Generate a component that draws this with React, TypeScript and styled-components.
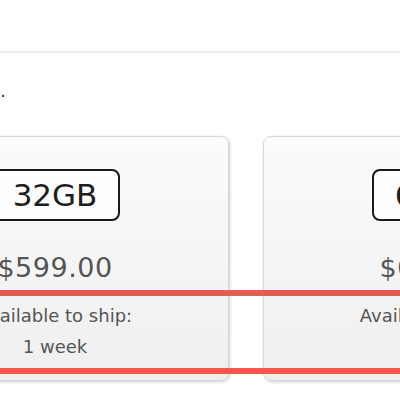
import React from "react";
import styled, { createGlobalStyle } from "styled-components";

const GlobalStyle = createGlobalStyle`
  html, body {
    margin: 0;
    padding: 0;
    background: #fff;
  }
  body {
    font-family: "DejaVu Sans", "Liberation Sans", sans-serif;
  }
`;

const Page = styled.div`
  position: relative;
  width: 400px;
  height: 400px;
  overflow: hidden;
  background: #fff;
`;

const Header = styled.div`
  height: 51px;
  border-bottom: 2px solid #ebebeb;
`;

const Intro = styled.p`
  margin: 27px 0 0 -300px;
  width: 306px;
  text-align: right;
  white-space: nowrap;
  font-size: 18px;
  line-height: 22px;
  color: #333;
`;

const CardRow = styled.div`
  display: flex;
  gap: 34px;
  margin: 34px 0 0 -119px;
`;

const Card = styled.div`
  flex: 0 0 348px;
  box-sizing: border-box;
  display: flex;
  flex-direction: column;
  align-items: center;
  padding: 32px 0 18px;
  border: 1px solid #d8d8d8;
  border-radius: 8px;
  background: linear-gradient(#fbfbfb, #efefef);
  box-shadow: 1px 1px 3px rgba(0, 0, 0, 0.2);
`;

const Capacity = styled.div`
  box-sizing: border-box;
  width: 130px;
  height: 52px;
  display: flex;
  align-items: center;
  justify-content: center;
  border: 2px solid #1a1a1a;
  border-radius: 8px;
  background: #fdfdfd;
  font-size: 31px;
  color: #1e1e1e;
`;

const Price = styled.div`
  margin-top: 31px;
  font-size: 27px;
  line-height: 32px;
  letter-spacing: 0.5px;
  color: #555;
`;

const Shipping = styled.div`
  margin-top: 16px;
  font-size: 18px;
  line-height: 31px;
  text-align: center;
  color: #555;
`;

const Highlight = styled.div`
  position: absolute;
  top: 290px;
  left: -10px;
  right: -10px;
  height: 84px;
  box-sizing: border-box;
  border: 6px solid #ef5a50;
  pointer-events: none;
`;

const models = [
  { size: "32GB", price: "$599.00", ship: "1 week" },
  { size: "64GB", price: "$699.00", ship: "1 week" },
];

export default function App() {
  return (
    <>
      <GlobalStyle />
      <Page>
        <Header />
        <Intro>Select a model.</Intro>
        <CardRow>
          {models.map((m) => (
            <Card key={m.size}>
              <Capacity>{m.size}</Capacity>
              <Price>{m.price}</Price>
              <Shipping>
                Available to ship:
                <br />
                {m.ship}
              </Shipping>
            </Card>
          ))}
        </CardRow>
        <Highlight />
      </Page>
    </>
  );
}
